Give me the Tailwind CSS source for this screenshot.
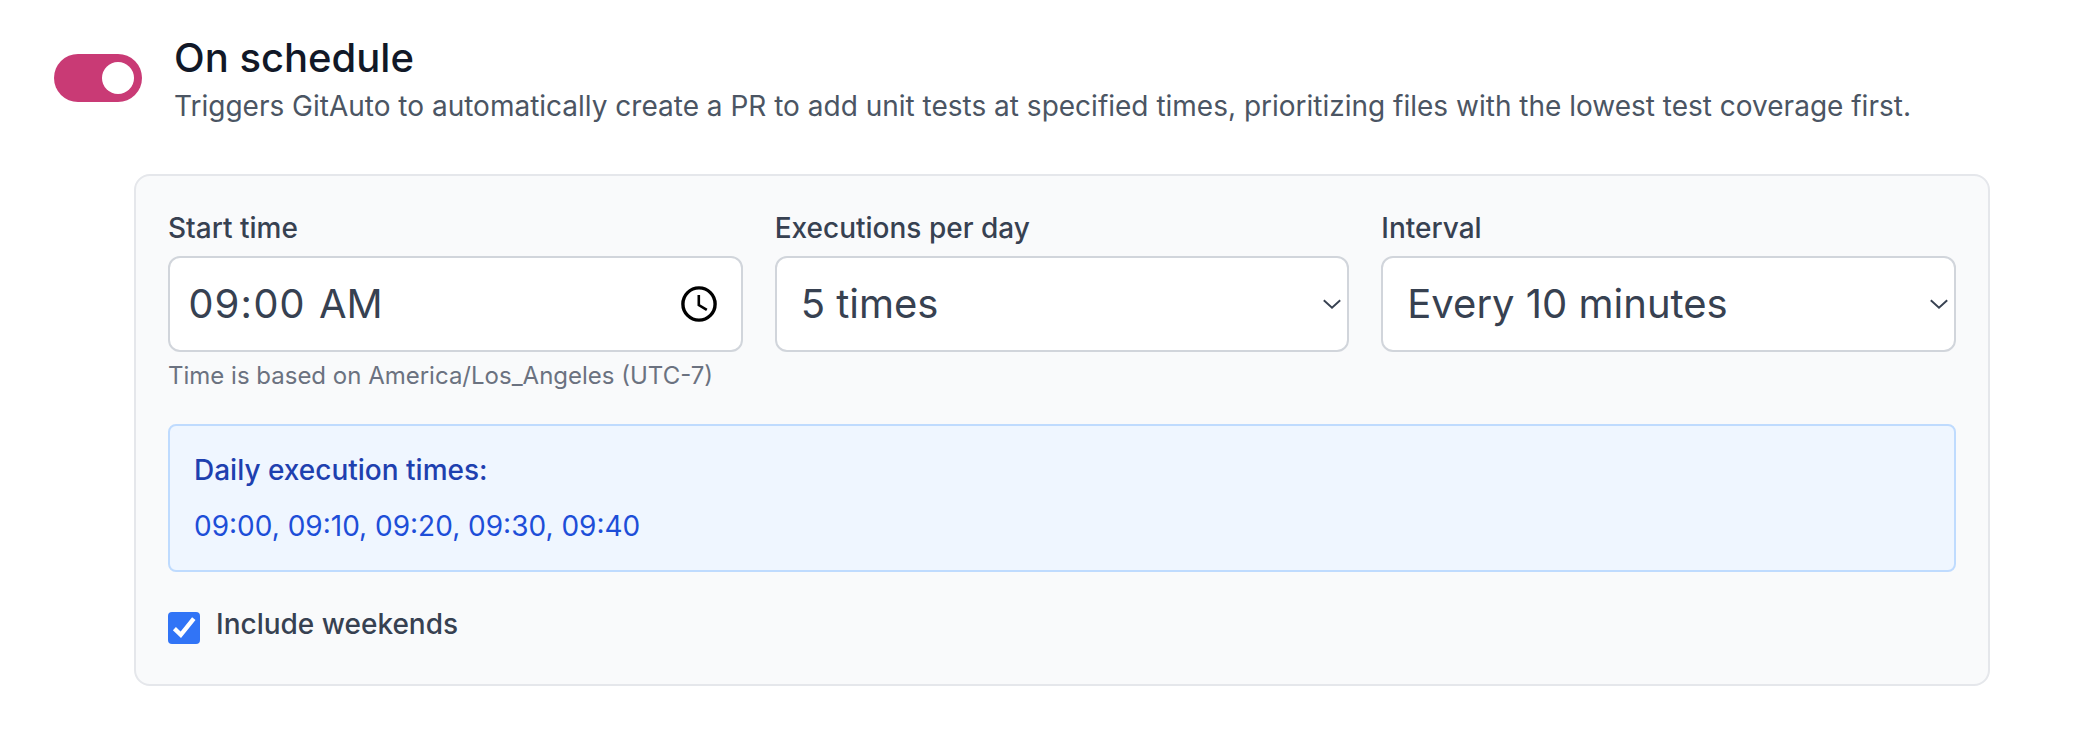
<!DOCTYPE html>
<html lang="en">
<head>
<meta charset="utf-8">
<title>On schedule</title>
<script src="https://cdn.jsdelivr.net/npm/@tailwindcss/browser@4"></script>
</head>
<body class="bg-white font-['Inter',sans-serif] antialiased">
<main class="w-[2074px] h-[744px] pt-[30px] overflow-hidden">
  <header class="flex pl-[54px]">
    <button type="button" role="switch" aria-checked="true" aria-label="On schedule" class="mt-6 flex h-12 w-[88px] items-center justify-end rounded-full bg-[#c93a75] pr-2">
      <span class="size-8 rounded-full bg-white"></span>
    </button>
    <div class="ml-8">
      <h3 class="h-14 whitespace-nowrap text-[40px] leading-[56px] font-medium text-[#111827]"><span>On schedule</span></h3>
      <p class="whitespace-nowrap text-[28px] leading-10 text-[#4b5563]"><span>Triggers GitAuto to automatically create a PR to add unit tests at specified times, prioritizing files with the lowest test coverage first.</span></p>
    </div>
  </header>

  <section class="mt-12 ml-[134px] h-[512px] w-[1856px] rounded-2xl border-2 border-[#e5e7eb] bg-[#f9fafb] p-8 text-[#374151]">
    <div class="grid grid-cols-3 gap-8">
      <div>
        <div class="mb-2 text-[28px] leading-10 font-medium"><span>Start time</span></div>
        <div class="flex h-24 items-center justify-between rounded-xl border-2 border-[#d1d5db] bg-white pr-6 pl-[18px] text-[40px] leading-[56px]">
          <div class="flex tabular-nums">
            <span class="w-[51px]">09</span>
            <span class="flex w-[14px] justify-center">:</span>
            <span class="w-[66px]">00</span>
            <span>AM</span>
          </div>
          <svg class="size-9" viewBox="0 0 36 36" fill="none" stroke="#000"><circle cx="18" cy="18" r="16.1" stroke-width="3.4"/><path d="M17.8 9V19L25.8 23.9" stroke-width="2.6"/></svg>
        </div>
        <p class="mt-2 text-2xl leading-8 text-[#6b7280]"><span>Time is based on America/Los_Angeles (UTC-7)</span></p>
      </div>
      <div>
        <div class="mb-2 text-[28px] leading-10 font-medium"><span>Executions per day</span></div>
        <div class="flex h-24 items-center justify-between rounded-xl border-2 border-[#d1d5db] bg-white pr-[5px] pl-6 text-[40px] leading-[56px]">
          <span>5 times</span>
          <svg class="h-3 w-5" viewBox="0 0 20 12" fill="none" stroke="#374151" stroke-width="1.9"><path d="M1.8 2.2L10 9.8L18.2 2.2"/></svg>
        </div>
      </div>
      <div>
        <div class="mb-2 text-[28px] leading-10 font-medium"><span>Interval</span></div>
        <div class="flex h-24 items-center justify-between rounded-xl border-2 border-[#d1d5db] bg-white pr-[5px] pl-6 text-[40px] leading-[56px]">
          <span>Every 10 minutes</span>
          <svg class="h-3 w-5" viewBox="0 0 20 12" fill="none" stroke="#374151" stroke-width="1.9"><path d="M1.8 2.2L10 9.8L18.2 2.2"/></svg>
        </div>
      </div>
    </div>

    <div class="mt-8 rounded-lg border-2 border-[#bfdbfe] bg-[#eff6ff] p-6 text-[28px] leading-10">
      <p class="mb-4 font-medium text-[#1e40af]"><span>Daily execution times:</span></p>
      <p class="text-[#1d4ed8]"><span>09:00, 09:10, 09:20, 09:30, 09:40</span></p>
    </div>

    <div class="mt-8 flex h-12 gap-4">
      <div class="mt-2 size-8 rounded-[4px] bg-[#3174f6]">
        <svg class="size-8" viewBox="0 0 32 32" fill="none" stroke="#fff" stroke-width="4.4"><path d="M6.4 16.6L12.8 22.8L25.8 6.6"/></svg>
      </div>
      <span class="text-[28px] leading-10 font-medium">Include weekends</span>
    </div>
  </section>
</main>
</body>
</html>
